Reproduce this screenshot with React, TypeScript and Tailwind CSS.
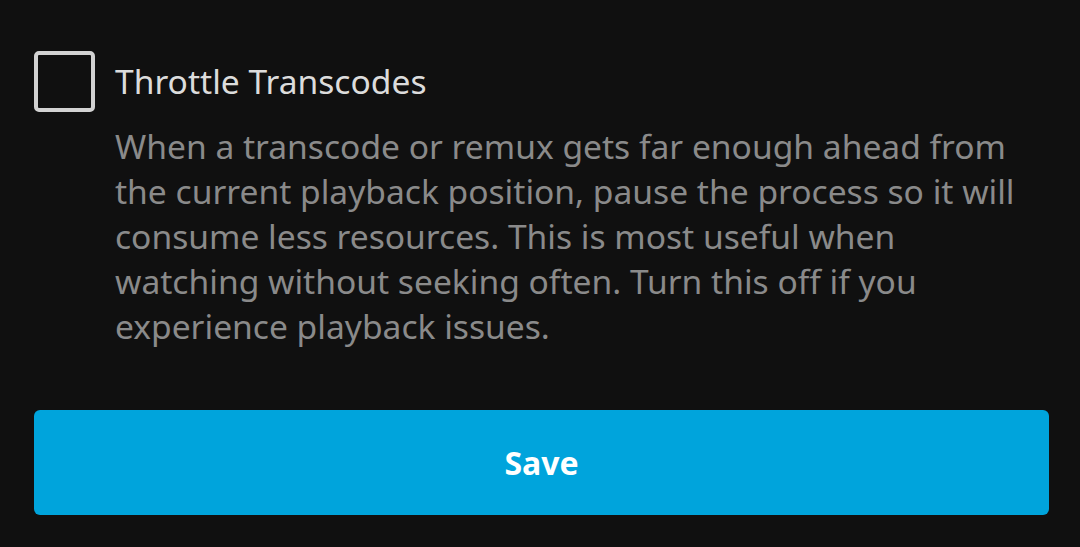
import React, { useState } from "react";

function App() {
  const [checked, setChecked] = useState(false);

  return (
    <div
      className="w-full min-h-screen bg-[#101010] px-[32px] pt-[51px] pb-8"
      style={{ fontFamily: '"Noto Sans", sans-serif' }}
    >
      <div className="flex items-start gap-5">
        <button
          className="w-[61px] h-[61px] shrink-0 ml-[2px] rounded-[5px] border-[4px] border-[#d2d2d2]"
          onClick={() => setChecked(!checked)}
        ></button>
        <div className="flex flex-col">
          <span className="text-[33.6px] leading-[61px] text-[#dcdcdc]">
            Throttle Transcodes
          </span>
          <p className="text-[33.6px] leading-[45px] text-[#8a8a8a] mt-[12px]">
            When a transcode or remux gets far enough ahead from the current
            playback position, pause the process so it will consume less
            resources. This is most useful when watching without seeking
            often. Turn this off if you experience playback issues.
          </p>
        </div>
      </div>

      <button className="w-[1015px] h-[105px] ml-[2px] mt-[61px] rounded-[6px] bg-[#00a4dc] text-white text-[32px] font-bold">
        Save
      </button>
    </div>
  );
}

export default App;
